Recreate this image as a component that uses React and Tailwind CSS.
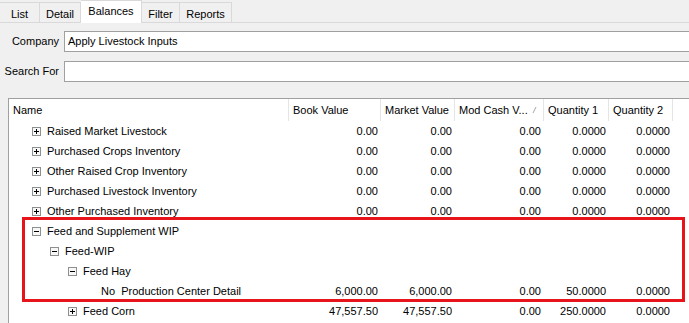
import React from "react";

const cols = [
  { key: "name", label: "Name", w: 280 },
  { key: "book", label: "Book Value", w: 92 },
  { key: "market", label: "Market Value", w: 74 },
  { key: "mod", label: "Mod Cash V...", w: 89 },
  { key: "q1", label: "Quantity 1", w: 65 },
  { key: "q2", label: "Quantity 2", w: 64 },
];

const rows = [
  { level: 1, icon: "plus", name: "Raised Market Livestock", v: ["0.00", "0.00", "0.00", "0.0000", "0.0000"] },
  { level: 1, icon: "plus", name: "Purchased Crops Inventory", v: ["0.00", "0.00", "0.00", "0.0000", "0.0000"] },
  { level: 1, icon: "plus", name: "Other Raised Crop Inventory", v: ["0.00", "0.00", "0.00", "0.0000", "0.0000"] },
  { level: 1, icon: "plus", name: "Purchased Livestock Inventory", v: ["0.00", "0.00", "0.00", "0.0000", "0.0000"] },
  { level: 1, icon: "plus", name: "Other Purchased Inventory", v: ["0.00", "0.00", "0.00", "0.0000", "0.0000"] },
  { level: 1, icon: "minus", name: "Feed and Supplement WIP", v: null },
  { level: 2, icon: "minus", name: "Feed-WIP", v: null },
  { level: 3, icon: "minus", name: "Feed Hay", v: null },
  { level: 4, icon: null, name: "No  Production Center Detail", v: ["6,000.00", "6,000.00", "0.00", "50.0000", "0.0000"] },
  { level: 3, icon: "plus", name: "Feed Corn", v: ["47,557.50", "47,557.50", "0.00", "250.0000", "0.0000"] },
];

function Box({ type }) {
  return (
    <svg width="9" height="9" viewBox="0 0 9 9" className="shrink-0">
      <rect x="0.5" y="0.5" width="8" height="8" fill="#f7f7f7" stroke="#8e8f8f" />
      <line x1="2" y1="4.5" x2="7" y2="4.5" stroke="#000" />
      {type === "plus" && <line x1="4.5" y1="2" x2="4.5" y2="7" stroke="#000" />}
    </svg>
  );
}

export default function App() {
  const indent = { 1: 23, 2: 41, 3: 59, 4: 92 };
  return (
    <div
      className="relative w-[689px] h-[323px] overflow-hidden bg-[#f0f0f0] text-[11px] text-black"
      style={{ fontFamily: '"Liberation Sans", Arial, sans-serif' }}
    >
      {/* Tabs */}
      <div className="flex items-end h-[23px] border-b border-[#d9d9d9]">
        <div className="h-[21px] w-[40px] border-r border-t border-[#d9d9d9] flex items-center justify-center -mb-px pt-[2px]">List</div>
        <div className="h-[21px] w-[41px] border-r border-t border-[#d9d9d9] flex items-center justify-center -mb-px pt-[2px]">Detail</div>
        <div className="h-[23px] w-[61px] bg-white border-r border-t border-[#d9d9d9] flex items-center justify-center -mb-px pb-[1px]">Balances</div>
        <div className="h-[21px] w-[38px] border-r border-t border-[#d9d9d9] flex items-center justify-center -mb-px pt-[2px]">Filter</div>
        <div className="h-[21px] w-[52px] border-r border-t border-[#d9d9d9] flex items-center justify-center -mb-px pt-[2px]">Reports</div>
      </div>

      {/* Company */}
      <div className="flex items-center mt-[8px] h-[21px]">
        <div className="w-[60px] text-right pr-[1px]">Company</div>
        <div className="ml-[4px] flex-1 h-[21px] bg-white border border-[#a0a0a0] border-r-0 flex items-center pl-[3px]">
          Apply Livestock Inputs
        </div>
      </div>

      {/* Search */}
      <div className="flex items-center mt-[9px] h-[21px]">
        <div className="w-[60px] text-right pr-[1px]">Search For</div>
        <div className="ml-[4px] flex-1 h-[21px] bg-white border border-[#a0a0a0] border-r-0" />
      </div>

      {/* Grid */}
      <div className="mt-[16px] ml-[8px] h-[300px] bg-white border-l border-t border-[#a0a0a0]">
        <div className="flex h-[22px]">
          {cols.map((c) => (
            <div
              key={c.key}
              style={{ width: c.w }}
              className="shrink-0 h-full flex items-center border-r border-[#e5e5e5] pl-[4px] relative"
            >
              {c.label}
              {c.key === "mod" && (
                <svg width="5" height="8" viewBox="0 0 5 8" className="absolute right-[6px] top-[7px]">
                  <line x1="1" y1="7" x2="4" y2="1" stroke="#a6a6a6" strokeWidth="1" />
                </svg>
              )}
            </div>
          ))}
        </div>
        {rows.map((r, idx) => (
          <div key={idx} className="flex h-[20px] items-center">
            <div style={{ width: 280 }} className="shrink-0 flex items-center">
              <div style={{ width: indent[r.level] }} className="shrink-0" />
              {r.icon && (
                <>
                  <Box type={r.icon} />
                  <div className="w-[6px] shrink-0" />
                </>
              )}
              <span className="whitespace-pre">{r.name}</span>
            </div>
            {cols.slice(1).map((c, j) => (
              <div key={c.key} style={{ width: c.w }} className="shrink-0 text-right pr-[3px]">
                {r.v ? r.v[j] : ""}
              </div>
            ))}
          </div>
        ))}
      </div>

      {/* Red highlight annotation */}
      <div className="absolute left-[22px] top-[217px] w-[663px] h-[85px] border-[3px] border-[#e8141c] pointer-events-none" />
    </div>
  );
}
